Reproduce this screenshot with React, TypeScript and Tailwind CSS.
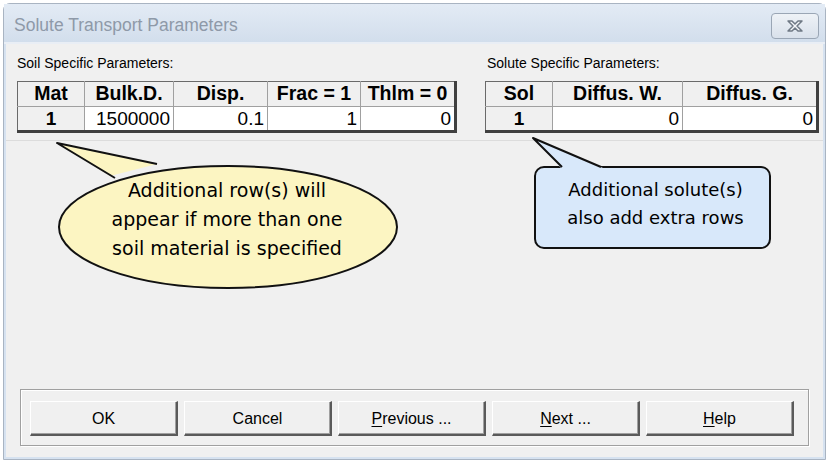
import React from "react";

const soilCols = [
  { label: "Mat", w: "w-[67px]" },
  { label: "Bulk.D.", w: "w-[89px]" },
  { label: "Disp.", w: "w-[94px]" },
  { label: "Frac = 1", w: "w-[93px]" },
  { label: "Thlm = 0", w: "w-[95px]" },
];
const soilRow = ["1500000", "0.1", "1", "0"];

const soluteCols = [
  { label: "Sol", w: "w-[67px]" },
  { label: "Diffus. W.", w: "w-[130px]" },
  { label: "Diffus. G.", w: "w-[135px]" },
];
const soluteRow = ["0", "0"];

function Grid({ cols, row }: { cols: { label: string; w: string }[]; row: string[] }) {
  return (
    <table className="border-collapse border-t border-l border-[#6a6a6a] border-r-[3px] border-b-[3px] border-r-[#404040] border-b-[#404040] text-black">
      <thead>
        <tr className="h-[25px]">
          {cols.map((c) => (
            <th
              key={c.label}
              className={`${c.w} border-r border-b border-[#a0a0a0] bg-[#f0f0f0] p-0 text-center text-[19.5px] font-bold leading-none`}
            >
              {c.label}
            </th>
          ))}
        </tr>
      </thead>
      <tbody>
        <tr className="h-[25px]">
          <td className="border-r border-[#a0a0a0] bg-[#f0f0f0] p-0 text-center text-[19px] font-bold leading-none">1</td>
          {row.map((v, i) => (
            <td key={i} className="border-r border-[#a0a0a0] bg-white py-0 pr-[3px] text-right text-[19px] leading-none">
              {v}
            </td>
          ))}
        </tr>
      </tbody>
    </table>
  );
}

function WinButton({ children }: { children: React.ReactNode }) {
  return (
    <button className="flex h-[35px] w-[148px] items-center justify-center border-t border-l border-t-white border-l-white border-r-2 border-b-2 border-r-[#5a5a5a] border-b-[#5a5a5a] bg-[#f0f0f0] pt-[2px] text-[16px] text-black shadow-[inset_-1px_-1px_0_#a0a0a0]">
      {children}
    </button>
  );
}

export default function App() {
  return (
    <div className="h-[460px] w-[826px] bg-white pl-[3px] pt-[3px] font-['Liberation_Sans',Arial,sans-serif]">
      <div className="flex h-[457px] w-[823px] flex-col rounded-tl-[7px] rounded-tr-[7px] border border-[#a9b4c2] bg-[#d6e2f0]">
        {/* title bar */}
        <div className="flex h-[38px] items-center justify-between bg-gradient-to-b from-[#e3ebf5] to-[#d2deec] pl-[10px] pr-[6px]">
          <span className="mt-[4px] text-[17.5px] text-[#8e99a8]">Solute Transport Parameters</span>
          <div className="mt-[6px] flex h-[26px] w-[48px] items-center justify-center rounded-[4px] border border-[#9aa6b5] bg-gradient-to-b from-[#eef2f7] to-[#d9e1eb]">
            <svg width="18" height="12" viewBox="0 0 18 12">
              <path d="M2 1 L6 1 L9 4 L12 1 L16 1 L11 6 L16 11 L12 11 L9 8 L6 11 L2 11 L7 6 Z" fill="#f4f6f9" stroke="#6f7985" strokeWidth="1.5" strokeLinejoin="round" />
            </svg>
          </div>
        </div>
        <div className="h-[2px] bg-[#e9eef5]" />
        {/* client */}
        <div className="relative mx-[2px] mb-[2px] flex flex-1 flex-col bg-[#f0f0f0]">
          <div className="flex gap-[28px] border-b border-[#dcdcdc] pl-[11px] pt-[11px] pb-[7px]">
            <div>
              <div className="mb-[10px] text-[14px] leading-[16px] text-black">Soil Specific Parameters:</div>
              <Grid cols={soilCols} row={soilRow} />
            </div>
            <div>
              <div className="mb-[10px] pl-[2px] text-[14px] leading-[16px] text-black">Solute Specific Parameters:</div>
              <Grid cols={soluteCols} row={soluteRow} />
            </div>
          </div>

          <div className="flex-1" />

          {/* buttons group */}
          <div className="mx-[14px] mb-[11px] flex h-[57px] items-center gap-[6px] border border-[#a0a0a0] pl-[9px] pt-[2px] shadow-[inset_1px_1px_0_#fff,1px_1px_0_#fff]">
            <WinButton>OK</WinButton>
            <WinButton>Cancel</WinButton>
            <WinButton>
              <span>
                <span className="underline underline-offset-2">P</span>revious ...
              </span>
            </WinButton>
            <WinButton>
              <span>
                <span className="underline underline-offset-2">N</span>ext ...
              </span>
            </WinButton>
            <WinButton>
              <span>
                <span className="underline underline-offset-2">H</span>elp
              </span>
            </WinButton>
          </div>

          {/* yellow callout */}
          <div className="absolute left-[48px] top-[96px] h-[150px] w-[346px]">
            <svg width="346" height="150" viewBox="0 0 346 150" className="absolute left-0 top-0">
              <ellipse cx="174" cy="87" rx="169" ry="61" fill="#fcf5c2" stroke="#111" strokeWidth="2" />
              <path d="M56 36 L3 3 L103 24 Z" fill="#fcf5c2" />
              <path d="M61 38 L3 3 L103 24" fill="none" stroke="#111" strokeWidth="2" strokeLinejoin="round" />
            </svg>
            <div className="absolute left-0 top-[36px] w-[346px] text-center font-['DejaVu_Sans',sans-serif] text-[19px] leading-[29px] text-black">
              Additional row(s) will
              <br />
              appear if more than one
              <br />
              soil material is specified
            </div>
          </div>

          {/* blue callout */}
          <div className="absolute left-[525px] top-[92px] h-[115px] w-[242px]">
            <svg width="242" height="115" viewBox="0 0 242 115" className="absolute left-0 top-0">
              <rect x="4" y="31" width="235" height="81" rx="9" fill="#d8e8fa" stroke="#111" strokeWidth="2" />
              <path d="M30 32 L2 2 L72 32 Z" fill="#d8e8fa" />
              <path d="M31 31 L2 2 L70 31" fill="none" stroke="#111" strokeWidth="2" strokeLinejoin="round" />
            </svg>
            <div className="absolute left-[4px] top-[40px] w-[235px] pl-[6px] text-center font-['DejaVu_Sans',sans-serif] text-[18px] leading-[28px] text-black">
              Additional solute(s)
              <br />
              also add extra rows
            </div>
          </div>
        </div>
      </div>
    </div>
  );
}
